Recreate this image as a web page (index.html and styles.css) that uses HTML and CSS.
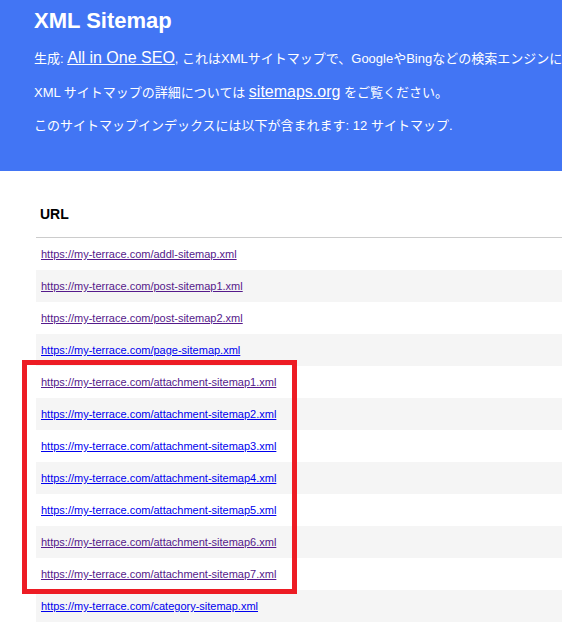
FILE: index.html
```html
<!DOCTYPE html>
<html lang="ja">
<head>
<meta charset="utf-8">
<title>XML Sitemap</title>
<link rel="stylesheet" href="styles.css">
</head>
<body>
<div class="header">
  <h1 class="title">XML Sitemap</h1>
  <p class="desc">生成: <a class="hlink" href="#">All in One SEO</a>, これはXMLサイトマップで、GoogleやBingなどの検索エンジンによって読み込まれることを目的としています。</p>
  <p class="desc">XML サイトマップの詳細については <a class="hlink" href="#">sitemaps.org</a> をご覧ください。</p>
  <p class="desc">このサイトマップインデックスには以下が含まれます: 12 サイトマップ.</p>
</div>
<div class="content">
  <table class="sitemap">
    <thead>
      <tr><th>URL</th></tr>
    </thead>
    <tbody>
      <tr><td><a class="visited" href="#">https://my-terrace.com/addl-sitemap.xml</a></td></tr>
      <tr><td><a class="visited" href="#">https://my-terrace.com/post-sitemap1.xml</a></td></tr>
      <tr><td><a class="visited" href="#">https://my-terrace.com/post-sitemap2.xml</a></td></tr>
      <tr><td><a class="link" href="#">https://my-terrace.com/page-sitemap.xml</a></td></tr>
      <tr><td><a class="visited" href="#">https://my-terrace.com/attachment-sitemap1.xml</a></td></tr>
      <tr><td><a class="link" href="#">https://my-terrace.com/attachment-sitemap2.xml</a></td></tr>
      <tr><td><a class="link" href="#">https://my-terrace.com/attachment-sitemap3.xml</a></td></tr>
      <tr><td><a class="link" href="#">https://my-terrace.com/attachment-sitemap4.xml</a></td></tr>
      <tr><td><a class="link" href="#">https://my-terrace.com/attachment-sitemap5.xml</a></td></tr>
      <tr><td><a class="visited" href="#">https://my-terrace.com/attachment-sitemap6.xml</a></td></tr>
      <tr><td><a class="visited" href="#">https://my-terrace.com/attachment-sitemap7.xml</a></td></tr>
      <tr><td><a class="link" href="#">https://my-terrace.com/category-sitemap.xml</a></td></tr>
    </tbody>
  </table>
</div>
<div class="highlight"></div>
</body>
</html>
```

FILE: styles.css
```css
html, body {
  margin: 0;
  padding: 0;
  overflow: hidden;
}
body {
  font-family: "Liberation Sans", Arial, "Noto Sans CJK JP", sans-serif;
  color: #000;
  background: #fff;
  position: relative;
  width: 562px;
  height: 641px;
}
.header {
  background: #4275f4;
  color: #fff;
  padding: 8px 0 35px 34px;
  white-space: nowrap;
  overflow: hidden;
}
.title {
  margin: 0;
  font-size: 22px;
  line-height: 26px;
  font-weight: bold;
}
.desc {
  margin: 14px 0 0 0;
  font-size: 13px;
  line-height: 20px;
  height: 20px;
}
.desc + .desc {
  margin-top: 14px;
}
.hlink {
  color: #fff;
  font-size: 16px;
  text-decoration: underline;
}
.content {
  padding: 20px 0 0 36px;
}
.sitemap {
  width: 100%;
  border-collapse: collapse;
}
.sitemap th {
  text-align: left;
  font-size: 14px;
  line-height: 16px;
  font-weight: bold;
  padding: 15px 4px 15px 4px;
  border-bottom: 1px solid #cccccc;
}
.sitemap td {
  font-size: 11px;
  line-height: 14px;
  padding: 9px 5px;
}
.sitemap tbody tr:nth-child(even) td {
  background: #f5f5f5;
}
.link {
  color: #0000ee;
}
.visited {
  color: #551a8b;
}
.highlight {
  position: absolute;
  left: 22px;
  top: 360px;
  width: 275px;
  height: 234px;
  box-sizing: border-box;
  border: 5px solid #ed1c24;
}
```
